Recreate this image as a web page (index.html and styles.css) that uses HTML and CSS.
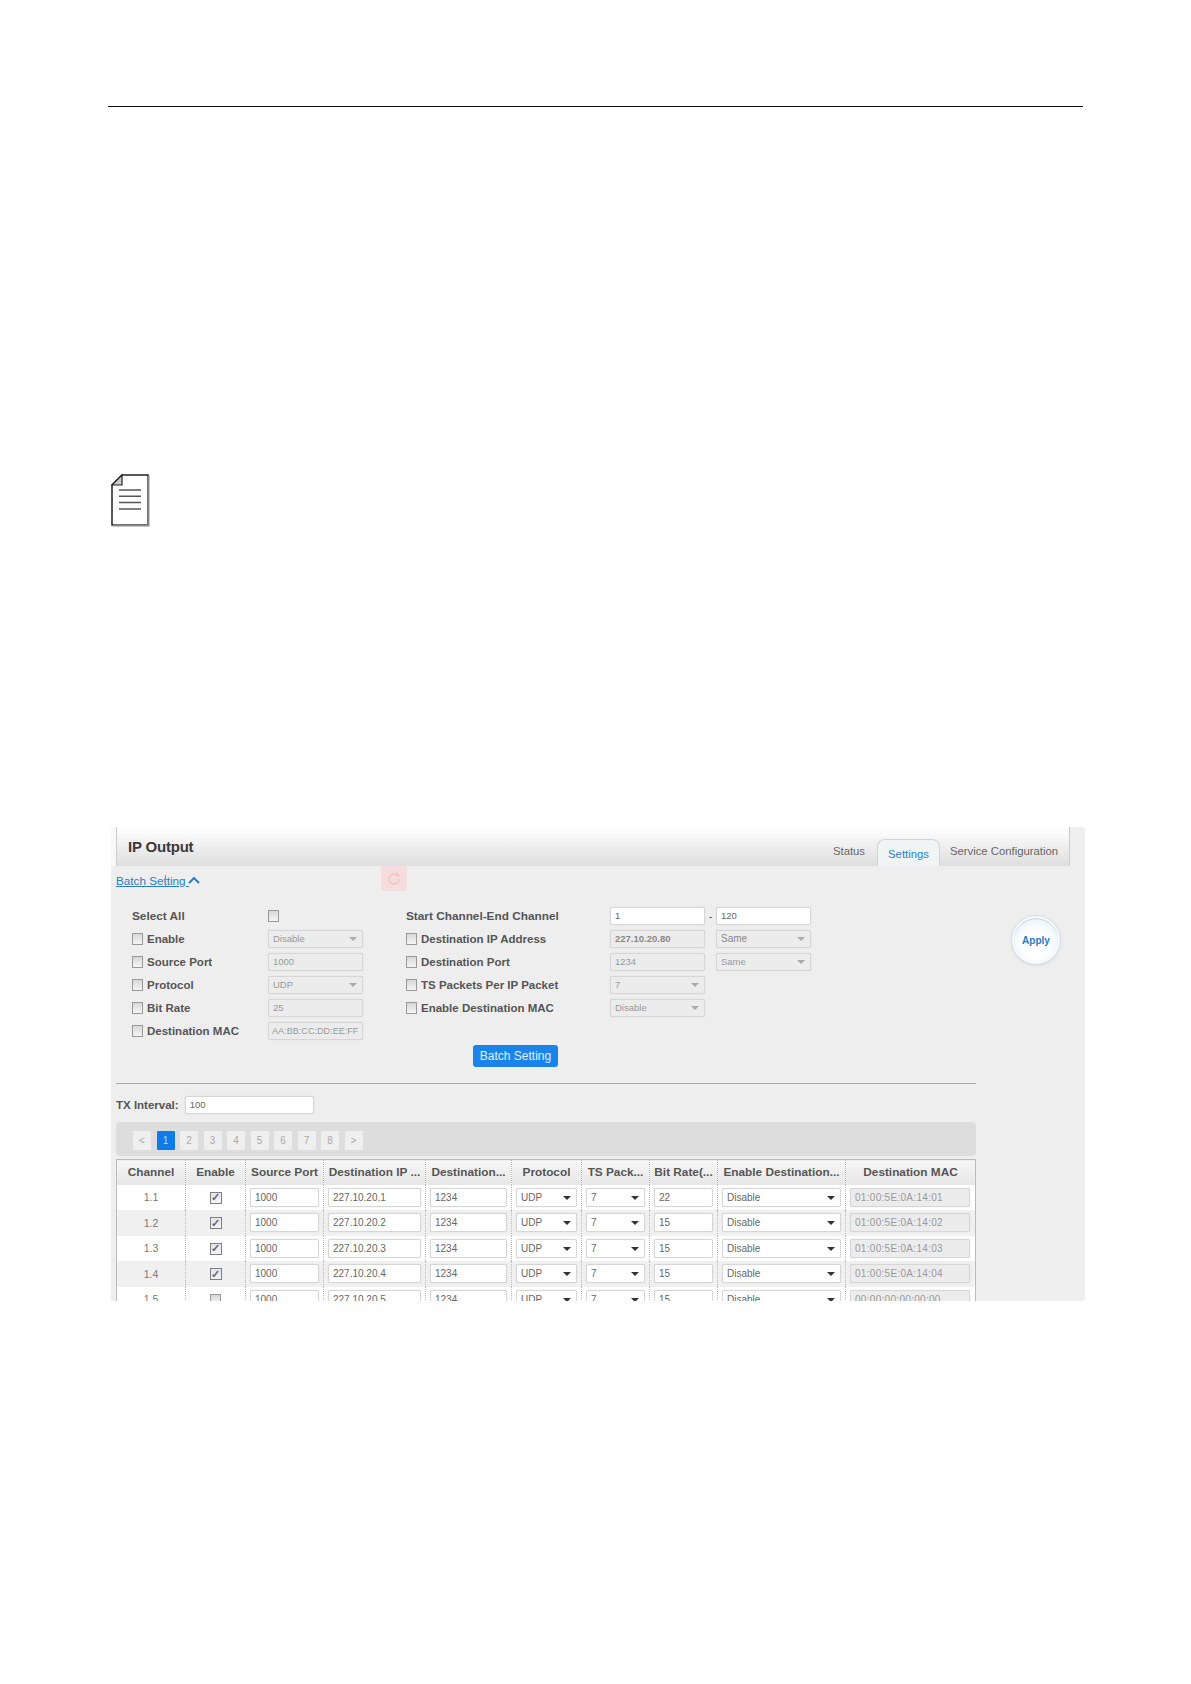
FILE: index.html
```html
<!DOCTYPE html>
<html lang="en">
<head>
<meta charset="utf-8">
<title>IP Output</title>
<link rel="stylesheet" href="styles.css">
</head>
<body>
<div class="page">
  <hr class="top-rule">
  <svg class="note-icon" width="40" height="54" viewBox="0 0 40 54" aria-hidden="true">
    <path d="M12 2H38V52H2V12Z" fill="#fff" stroke="#222" stroke-width="1.5"/>
    <path d="M38.500 3V52.500H3" fill="none" stroke="#8a8a8a" stroke-width="2"/>
    <path d="M12 2V12H2Z" fill="#ccc" stroke="#222" stroke-width="1.2"/>
    <path d="M9 17H31M9 23.300H31M9 29.600H31M9 35.900H31" stroke="#555" stroke-width="1.500"/>
  </svg>
  <section class="panel">
    <header class="panel-head">
      <h1 class="panel-title">IP Output</h1>
      <nav class="tabs">
        <span class="tab">Status</span>
        <span class="tab tab-active">Settings</span>
        <span class="tab">Service Configuration</span>
      </nav>
    </header>
    <div class="ghost"><svg width="16" height="16" viewBox="0 0 16 16" aria-hidden="true"><path d="M13 8A5 5 0 1 1 11 4M11 1.500V4.500H14" fill="none" stroke="#f4c4c4" stroke-width="1.500"/></svg></div>
    <div class="panel-body">
      <div class="main">
        <a class="batch-link"><span class="batch-link-text">Batch Setting </span><svg class="chev" width="12" height="8" viewBox="0 0 12 8" aria-hidden="true"><path d="M1 7L6 2L11 7" fill="none" stroke="#1f7ac8" stroke-width="1.800"/></svg></a>
        <div class="batch-form">
          <div class="form-col">
            <div class="frow"><span class="flabel plain">Select All</span><span class="cb cb-lone"></span></div>
            <div class="frow"><span class="flabel"><span class="cb"></span>Enable</span><span class="field off sel">Disable</span></div>
            <div class="frow"><span class="flabel"><span class="cb"></span>Source Port</span><span class="field off">1000</span></div>
            <div class="frow"><span class="flabel"><span class="cb"></span>Protocol</span><span class="field off sel">UDP</span></div>
            <div class="frow"><span class="flabel"><span class="cb"></span>Bit Rate</span><span class="field off">25</span></div>
            <div class="frow"><span class="flabel"><span class="cb"></span>Destination MAC</span><span class="field off tight">AA:BB:CC:DD:EE:FF</span></div>
          </div>
          <div class="form-col form-col-b">
            <div class="frow"><span class="flabel wide plain">Start Channel-End Channel</span><span class="field">1</span><span class="dash">-</span><span class="field">120</span></div>
            <div class="frow"><span class="flabel wide"><span class="cb"></span>Destination IP Address</span><span class="field off strong">227.10.20.80</span><span class="dash"></span><span class="field off sel strong-sel">Same</span></div>
            <div class="frow"><span class="flabel wide"><span class="cb"></span>Destination Port</span><span class="field off">1234</span><span class="dash"></span><span class="field off sel">Same</span></div>
            <div class="frow"><span class="flabel wide"><span class="cb"></span>TS Packets Per IP Packet</span><span class="field off sel">7</span></div>
            <div class="frow"><span class="flabel wide"><span class="cb"></span>Enable Destination MAC</span><span class="field off sel">Disable</span></div>
          </div>
        </div>
        <div class="batch-action"><button class="batch-btn" type="button">Batch Setting</button></div>
        <hr class="divider">
        <div class="tx-row"><span class="tx-label">TX Interval:</span><span class="field tx-field">100</span></div>
        <div class="pager">
          <span class="pg">&lt;</span><span class="pg pg-on">1</span><span class="pg">2</span><span class="pg">3</span><span class="pg">4</span><span class="pg">5</span><span class="pg">6</span><span class="pg">7</span><span class="pg">8</span><span class="pg">&gt;</span>
        </div>
        <table class="grid">
          <colgroup><col class="c1"><col class="c2"><col class="c3"><col class="c4"><col class="c5"><col class="c6"><col class="c7"><col class="c8"><col class="c9"><col class="c10"></colgroup>
          <thead><tr><th>Channel</th><th>Enable</th><th>Source Port</th><th>Destination IP ...</th><th>Destination...</th><th>Protocol</th><th>TS Pack...</th><th>Bit Rate(...</th><th>Enable Destination...</th><th>Destination MAC</th></tr></thead>
          <tbody>
            <tr><td>1.1</td><td><span class="cb cb-on">&#10003;</span></td><td><span class="field">1000</span></td><td><span class="field">227.10.20.1</span></td><td><span class="field">1234</span></td><td><span class="field sel dark">UDP</span></td><td><span class="field sel dark">7</span></td><td><span class="field">22</span></td><td><span class="field sel dark">Disable</span></td><td><span class="field off mac">01:00:5E:0A:14:01</span></td></tr>
            <tr><td>1.2</td><td><span class="cb cb-on">&#10003;</span></td><td><span class="field">1000</span></td><td><span class="field">227.10.20.2</span></td><td><span class="field">1234</span></td><td><span class="field sel dark">UDP</span></td><td><span class="field sel dark">7</span></td><td><span class="field">15</span></td><td><span class="field sel dark">Disable</span></td><td><span class="field off mac">01:00:5E:0A:14:02</span></td></tr>
            <tr><td>1.3</td><td><span class="cb cb-on">&#10003;</span></td><td><span class="field">1000</span></td><td><span class="field">227.10.20.3</span></td><td><span class="field">1234</span></td><td><span class="field sel dark">UDP</span></td><td><span class="field sel dark">7</span></td><td><span class="field">15</span></td><td><span class="field sel dark">Disable</span></td><td><span class="field off mac">01:00:5E:0A:14:03</span></td></tr>
            <tr><td>1.4</td><td><span class="cb cb-on">&#10003;</span></td><td><span class="field">1000</span></td><td><span class="field">227.10.20.4</span></td><td><span class="field">1234</span></td><td><span class="field sel dark">UDP</span></td><td><span class="field sel dark">7</span></td><td><span class="field">15</span></td><td><span class="field sel dark">Disable</span></td><td><span class="field off mac">01:00:5E:0A:14:04</span></td></tr>
            <tr><td>1.5</td><td><span class="cb"></span></td><td><span class="field">1000</span></td><td><span class="field">227.10.20.5</span></td><td><span class="field">1234</span></td><td><span class="field sel dark">UDP</span></td><td><span class="field sel dark">7</span></td><td><span class="field">15</span></td><td><span class="field sel dark">Disable</span></td><td><span class="field off mac">00:00:00:00:00:00</span></td></tr>
          </tbody>
        </table>
      </div>
      <aside class="side"><button class="apply" type="button">Apply</button></aside>
    </div>
  </section>
</div>
</body>
</html>
```

FILE: styles.css
```css
* { box-sizing: border-box; }
html, body { margin: 0; padding: 0; background: #fff; }
body { font-family: "Liberation Sans", Arial, sans-serif; color: #444; }

.page { width: 1191px; height: 1684px; padding: 106px 106px 0 108px; overflow: hidden; }
.top-rule { margin: 0; height: 1px; border: 0; background: #111; width: 975px; }

.note-icon { display: block; margin: 366px 0 0 2px; }

.panel { position: relative; width: 974px; height: 474px; margin: 300px 0 0 3px; overflow: hidden; background: linear-gradient(90deg, #f8f8f8 5px, transparent 5px) 0 0 / 100% 39px no-repeat, #eee; }

.panel-head { display: flex; justify-content: space-between; align-items: flex-end; height: 39px; margin: 0 15px 0 5px; padding: 0 0 0 11px; background: linear-gradient(#fff, #dedede); border-left: 1px solid #ccc; border-right: 1px solid #ccc; }
.panel-title { margin: 0; align-self: center; font-size: 15px; font-weight: bold; color: #3a3a3a; letter-spacing: -0.2px; }
.tabs { display: flex; align-items: flex-end; height: 28px; }
.tab { height: 28px; padding: 7px 11px 0 12px; font-size: 11.300px; color: #666; }
.tab-active { height: 27px; width: 63px; padding: 8px 0 0; margin: 0 -2px 0 1px; text-align: center; color: #2a82cc; background: #f1f4f5; border: 1px solid #d4d4d4; border-bottom: 0; border-radius: 8px 8px 0 0; }

.ghost { position: absolute; left: 270px; top: 39px; width: 26px; height: 25px; display: flex; align-items: center; justify-content: center; background: #f6dcdc; border-radius: 2px; }

.panel-body { display: flex; }
.main { width: 865px; margin-left: 5px; flex: none; }
.batch-link { position: relative; display: flex; align-items: center; height: 28px; font-size: 11.700px; color: #2a7cc4; }
.batch-link::after { content: ""; position: absolute; left: 49px; top: 9px; width: 1px; height: 11px; background: #5a9bd4; }
.batch-link-text { text-decoration: underline; white-space: pre; }
.chev { margin-left: -1px; }

.batch-form { display: flex; margin: 10px 0 0 16px; }
.form-col { width: 273px; flex: none; }
.form-col-b { margin-left: 1px; }
.frow { display: flex; align-items: center; height: 23px; }
.flabel { display: flex; align-items: center; width: 136px; flex: none; font-size: 11.500px; font-weight: bold; color: #555; white-space: nowrap; }
.flabel.wide { width: 204px; }
.flabel.plain { font-size: 11.800px; }
.cb { display: inline-flex; align-items: center; justify-content: center; width: 11px; height: 12px; margin-right: 4px; flex: none; background: linear-gradient(#d8d8d8, #f4f4f4); border: 1px solid #999; font-size: 11px; font-weight: bold; line-height: 1; color: #667; }
.cb-lone { margin: 0; }
.cb-on { width: 12px; background: linear-gradient(#e4e4ea, #f6f6f8); border-color: #7d7d8c; margin: 0; }

.field { position: relative; display: block; width: 95px; height: 18px; line-height: 16px; padding: 0 4px; flex: none; font-size: 9.500px; color: #666; background: #fff; border: 1px solid #d6d6d6; border-radius: 2px; white-space: nowrap; overflow: hidden; box-shadow: 0 0 1px #ccc; }
.field.off { background: #ececec; color: #999; }
.field.strong { font-weight: bold; color: #888; }
.field.strong-sel { color: #888; font-size: 10px; }
.field.tight { font-size: 9.100px; padding: 0 3px; }
.sel::after { content: ""; position: absolute; right: 5px; top: 6px; border: 4px solid transparent; border-top-color: #aaa; border-bottom: 0; }
.sel.dark::after { border-top-color: #333; }
.dash { width: 11px; flex: none; text-align: center; font-size: 11px; color: #555; }

.batch-action { display: flex; margin: 3px 0 0 357px; }
.batch-btn { width: 85px; height: 22px; padding: 0; font: 12px "Liberation Sans", Arial, sans-serif; color: #e4f1ff; background: #1a84ea; border: 0; border-radius: 3px; }

.divider { height: 1px; margin: 16px 0 0; border: 0; background: #aaa; width: 860px; }
.tx-row { display: flex; align-items: center; gap: 6px; height: 18px; margin-top: 12px; }
.tx-label { font-size: 11.500px; font-weight: bold; color: #555; }
.tx-field { width: 129px; }

.pager { display: flex; align-items: center; gap: 5.500px; width: 860px; height: 34px; margin-top: 8px; padding: 2px 0 0 17px; background: #ddd; border-radius: 4px; }
.pg { width: 18px; height: 19px; line-height: 19px; text-align: center; font-size: 10px; color: #aaa; background: #efefef; border-radius: 1px; }
.pg-on { background: #0d7bea; color: #bcdcff; }

.grid { table-layout: fixed; width: 859px; margin-top: 3px; border-collapse: collapse; background: #fff; border: 1px solid #bbb; border-bottom: 0; }
.c1 { width: 69px; } .c2 { width: 60px; } .c3 { width: 78px; } .c4 { width: 102px; } .c5 { width: 86px; }
.c6 { width: 70px; } .c7 { width: 68px; } .c8 { width: 68px; } .c9 { width: 128px; } .c10 { width: 130px; }
.grid th { height: 25px; padding: 0 1px; font-size: 11.800px; font-weight: bold; color: #555; text-align: center; white-space: nowrap; overflow: hidden; background: linear-gradient(#f6f6f6, #e6e6e6); border-left: 1px dotted #bbb; }
.grid td { height: 25.500px; padding: 0 4px; font-size: 10.500px; color: #777; text-align: center; border-left: 1px dotted #bbb; }
.grid td:last-child { padding-right: 5px; }
.grid tbody tr:nth-child(even) td { background: #f0f0f0; }
.grid th:first-child, .grid td:first-child { border-left: 0; }
.grid .field { width: 100%; height: 19px; line-height: 17px; font-size: 10px; text-align: left; }
.grid .cb { margin: 0; vertical-align: middle; }
.grid .field.sel::after { top: 7px; }
.mac { letter-spacing: 0.3px; }

.side { flex: 1; display: flex; justify-content: flex-start; padding: 50px 0 0 31px; }
.apply { width: 48px; height: 48px; padding: 0; font: bold 10px "Liberation Sans", Arial, sans-serif; color: #1f78c8; background: radial-gradient(circle at 50% 60%, #fff 35%, #e0eff8); border: 2px solid #f6f8f9; border-radius: 50%; box-shadow: 0 0 0 1px #d4dde2, 0 1px 3px #ccc, inset 0 1px 1px #b8d2e2; }
```
